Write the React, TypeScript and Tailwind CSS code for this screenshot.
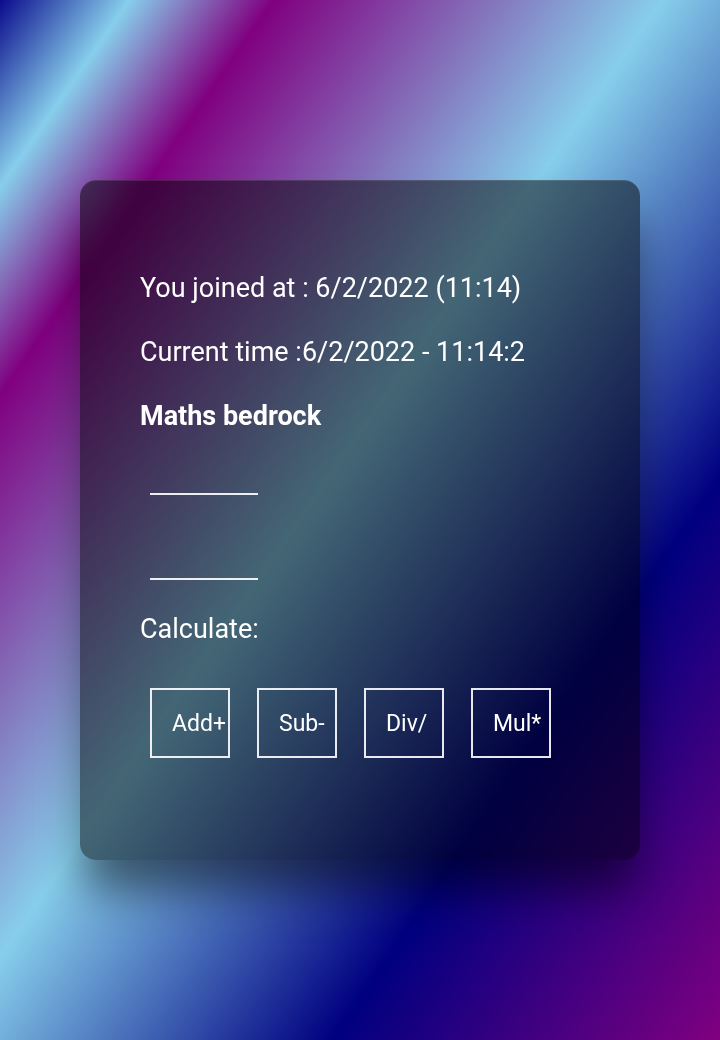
import React, { useState } from 'react';

const OPS = ['Add+', 'Sub-', 'Div/', 'Mul*'];

export default function App() {
  const [a, setA] = useState('');
  const [b, setB] = useState('');

  return (
    <div
      className="min-h-[1040px] w-full pt-[180px] pl-[80px] font-['Roboto',sans-serif] text-white bg-[linear-gradient(to_bottom_right,#0b0b8c_0%,#87ceeb_9%,#800080_19%,#87ceeb_46%,#000080_73%,#800080_100%)]"
    >
      <div className="w-[560px] h-[680px] rounded-[16px] bg-black/50 backdrop-blur-sm border-t border-white/10 shadow-[0_35px_45px_-5px_rgba(0,0,0,0.5)] pl-[60px] pt-[92px] flex flex-col items-start">
        <p className="text-[27px] leading-[30px]">You joined at : 6/2/2022 (11:14)</p>
        <p className="mt-[34px] text-[27px] leading-[30px]">Current time :6/2/2022 - 11:14:2</p>
        <p className="mt-[34px] text-[27px] leading-[30px] font-bold">Maths bedrock</p>

        <input
          value={a}
          onChange={(e) => setA(e.target.value)}
          className="mt-[34px] ml-[10px] w-[108px] h-[30px] bg-transparent border-b-2 border-white/90 outline-none text-white text-[22px]"
        />
        <input
          value={b}
          onChange={(e) => setB(e.target.value)}
          className="mt-[55px] ml-[10px] w-[108px] h-[30px] bg-transparent border-b-2 border-white/90 outline-none text-white text-[22px]"
        />

        <p className="mt-[34px] text-[27px] leading-[30px]">Calculate:</p>

        <div className="mt-[44px] ml-[10px] flex gap-[27px]">
          {OPS.map((op) => (
            <button
              key={op}
              className="w-[80px] h-[70px] border-2 border-white/90 pl-[20px] flex items-center whitespace-nowrap text-[23px] leading-none text-white"
            >
              {op}
            </button>
          ))}
        </div>
      </div>
    </div>
  );
}
